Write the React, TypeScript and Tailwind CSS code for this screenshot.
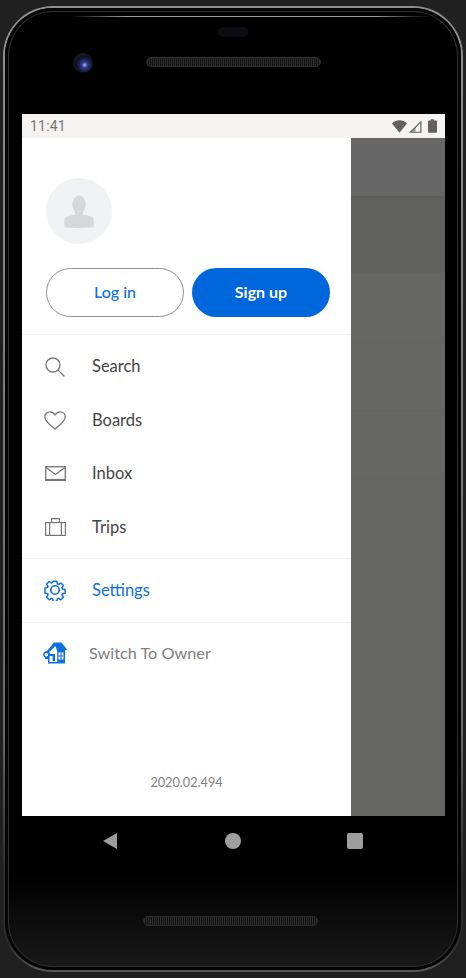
import type { ReactNode } from "react";

function Wifi() {
  return (
    <svg width="15" height="13" viewBox="0 0 15 13">
      <path d="M0 3.400C2 1.300 4.600 0.200 7.500 0.200s5.500 1.100 7.500 3.200L7.500 12.800z" fill="#616161" />
    </svg>
  );
}

function Signal() {
  return (
    <svg width="14" height="13" viewBox="0 0 14 13">
      <path d="M13.500 0.500V12.800H0.800zM12.300 3.300L3.700 11.700H12.300z" fill="#616161" fillRule="evenodd" />
      <path d="M7.500 7.800V11.700H3.700z" fill="#8a8a8a" />
    </svg>
  );
}

function Battery() {
  return (
    <svg width="9" height="14" viewBox="0 0 9 14">
      <path d="M2.800 0.200H6.200V1.400H8C8.600 1.400 9 1.800 9 2.300V13C9 13.500 8.600 13.800 8 13.800H1C0.400 13.800 0 13.500 0 13V2.300C0 1.800 0.400 1.400 1 1.400H2.800z" fill="#616161" />
    </svg>
  );
}

function Avatar() {
  return (
    <svg width="30" height="33" viewBox="0 0 30 33" fill="#d6d7d9">
      <ellipse cx="15" cy="9.500" rx="6.600" ry="9.300" />
      <path d="M11 16.500H19V19.500C22 20.500 26 20.800 28.300 22.200 29.300 22.800 29.700 23.800 29.700 25V31C29.700 32 29 32.700 28 32.600L15 33 2 32.600C1 32.700 0.300 32 0.300 31V25C0.300 23.800 0.700 22.800 1.700 22.200 4 20.800 8 20.500 11 19.500z" />
    </svg>
  );
}

function SearchIcon() {
  return (
    <svg width="20" height="20" viewBox="0 0 20 20" fill="none" stroke="#757575" strokeWidth="1.300">
      <circle cx="8" cy="8" r="7" />
      <path d="M13.100 13.100L19 19" strokeLinecap="round" />
    </svg>
  );
}

function HeartIcon() {
  return (
    <svg width="22" height="19" viewBox="0 0 22 19" fill="none" stroke="#757575" strokeWidth="1.300">
      <path d="M11 18C8 15.300 0.800 10.600 0.800 5.900 0.800 2.900 3.100 0.800 5.800 0.800c2.200 0 4 1.100 5.200 3.100C12.200 1.900 14 0.800 16.200 0.800c2.700 0 5 2.100 5 5.100C21.200 10.600 14 15.300 11 18z" strokeLinejoin="round" />
    </svg>
  );
}

function MailIcon() {
  return (
    <svg width="21" height="15" viewBox="0 0 21 15" fill="none" stroke="#757575" strokeWidth="1.300">
      <rect x="0.700" y="0.700" width="19.600" height="13.600" />
      <path d="M1 1.500L10.500 8.500L20 1.500" />
      <path d="M0.700 13.800H20.300" strokeWidth="1.800" />
    </svg>
  );
}

function SuitcaseIcon() {
  return (
    <svg width="21" height="18" viewBox="0 0 21 18" fill="none" stroke="#757575" strokeWidth="1.200">
      <rect x="0.600" y="4.600" width="19.800" height="12.800" />
      <path d="M4.600 17.400V4.600M16.400 17.400V4.600" />
      <path d="M6.600 4.600V0.700H14.400V4.600" />
    </svg>
  );
}

function GearIcon() {
  return (
    <svg width="22" height="22" viewBox="0 0 24 24" fill="none" stroke="#0d6fe0" strokeWidth="1.800" strokeLinejoin="round">
      <path d="M9.800 1.500h4.400l0.600 3.100 1.700 0.700 2.600-1.800 3.100 3.100-1.800 2.600 0.700 1.700 3.100 0.600v4.400l-3.100 0.600-0.700 1.700 1.800 2.600-3.100 3.100-2.600-1.800-1.700 0.700-0.600 3.100H9.800l-0.600-3.100-1.700-0.700-2.600 1.800-3.100-3.100 1.800-2.600-0.700-1.700-3.100-0.600V9.700l3.100-0.600 0.700-1.700-1.800-2.600 3.100-3.100 2.600 1.800 1.700-0.700z" transform="translate(1.200 1.200) scale(0.9)" />
      <circle cx="12" cy="12" r="4.600" />
    </svg>
  );
}

function OwnerIcon() {
  return (
    <svg width="24" height="22" viewBox="0 0 24 22">
      {/* roof and walls */}
      <path d="M11 0.500H18.500L24 7.500L22 8.500V21.500H5V17H2V10L4 9z" fill="#0d6fe0" />
      {/* front of the house */}
      <path d="M12.500 4L6.500 9.800V20H14.200V9z" fill="#fff" />
      {/* window */}
      <path d="M15.500 10.500H20.500V17.500H15.500z" fill="#fff" />
      <path d="M18 10.500V17.500M15.500 14H20.500" stroke="#0d6fe0" strokeWidth="1.100" />
      {/* key */}
      <circle cx="3.400" cy="12.800" r="2.500" fill="#fff" stroke="#0d6fe0" strokeWidth="1.400" />
      <path d="M5.500 12H12V19H9.600V14H5.500z" fill="#0d6fe0" />
    </svg>
  );
}

function MenuRow({ icon, label }: { icon: ReactNode; label: string }) {
  return (
    <div className="flex h-[53.500px] items-center">
      <div className="mr-[4px] flex w-[66px] shrink-0 justify-center">{icon}</div>
      <span className="text-[16.500px] text-[#454545]">{label}</span>
    </div>
  );
}

function Speaker() {
  return (
    <div className="h-[10px] w-[175px] rounded-full border border-[#2e2e2e] bg-[repeating-linear-gradient(90deg,#2b2b2b_0px,#2b2b2b_1px,#141414_1px,#141414_2px)]" />
  );
}

export default function App() {
  return (
    <div className="h-[978px] w-[466px] overflow-hidden bg-[#202020] px-[3px] pt-[6px] font-['Lato',sans-serif]">
      {/* device rim */}
      <div className="h-[966px] w-[460px] rounded-[50px] bg-[linear-gradient(180deg,#8f8f8f_0%,#6a6a6a_75%,#2a2a2a_90%,#2a2a2a_97%,#5a5a5a_100%)] p-[2px]">
        <div className="relative h-[962px] w-[456px] overflow-hidden rounded-[48px] bg-[linear-gradient(180deg,#000_0%,#000_90%,#1a1a1a_100%)] shadow-[inset_0_0_0_3px_#050505,inset_0_0_0_4px_#2e2e2e]">
          {/* top bezel */}
          <div className="relative h-[106px]">
            <div className="absolute left-[65px] top-[8px] h-[1px] w-[360px] bg-[linear-gradient(90deg,transparent,#9a9a9a_15%,#9a9a9a_85%,transparent)]" />
            <div className="absolute left-[213px] top-[19px] h-[10px] w-[30px] rounded-full bg-[#0b0d12]" />
            <div className="absolute left-[68px] top-[45px] h-[20px] w-[20px] rounded-full bg-[radial-gradient(circle_at_58%_60%,#a0b0ff_0%,#2b3a8c_18%,#0c1020_50%,#1c1d24_72%)]" />
            <div className="absolute left-[141px] top-[49px]">
              <Speaker />
            </div>
          </div>

          {/* screen */}
          <div className="ml-[17px] h-[702px] w-[423px] overflow-hidden">
            <div className="flex h-[24px] items-center justify-between bg-[#f4f3f1] px-[8px]">
              <span className="font-['Roboto',sans-serif] text-[14px] tracking-[0.2px] text-[#777777]">11:41</span>
              <div className="flex items-center">
                <Wifi />
                <div className="ml-[1px]">
                  <Signal />
                </div>
                <div className="ml-[6px] flex">
                  <Battery />
                </div>
              </div>
            </div>

            <div className="flex h-[678px]">
              {/* drawer */}
              <div className="flex w-[329px] flex-col bg-white">
                <div className="pl-[24px] pr-[21px] pt-[40px]">
                  <div className="flex h-[66px] w-[66px] items-center justify-center rounded-full bg-[#f1f2f4]">
                    <Avatar />
                  </div>
                  <div className="mt-[24px] flex gap-[8px]">
                    <div className="flex h-[49px] w-[138px] items-center justify-center rounded-full border border-[#8f8f8f] pb-[2px] text-[16px] font-medium text-[#0d6fe0]">
                      Log in
                    </div>
                    <div className="flex h-[49px] w-[138px] items-center justify-center rounded-full bg-[#0066dc] pb-[2px] text-[16px] font-bold text-white">
                      Sign up
                    </div>
                  </div>
                </div>

                <div className="mt-[17px] border-t border-[#efefef] pt-[5px]">
                  <MenuRow icon={<SearchIcon />} label="Search" />
                  <MenuRow icon={<HeartIcon />} label="Boards" />
                  <MenuRow icon={<MailIcon />} label="Inbox" />
                  <MenuRow icon={<SuitcaseIcon />} label="Trips" />
                </div>

                <div className="mt-[4px] flex h-[65px] items-center border-y border-[#efefef] pb-[1px]">
                  <div className="flex w-[66px] shrink-0 justify-center">
                    <GearIcon />
                  </div>
                  <span className="ml-[4px] text-[16.500px] text-[#0d6fe0]">Settings</span>
                </div>

                <div className="flex h-[61px] items-center pb-[1px]">
                  <div className="flex w-[66px] shrink-0 justify-center">
                    <OwnerIcon />
                  </div>
                  <span className="ml-[1px] text-[16.250px] text-[#808080]">Switch To Owner</span>
                </div>

                <div className="mt-[89px] text-center text-[12.700px] text-[#808080]">2020.02.494</div>
              </div>

              {/* dimmed content behind the drawer */}
              <div className="flex flex-1 flex-col bg-[#656563]">
                <div className="h-[59px] border-b border-[#5c5c5b] bg-[#666666]" />
                <div className="h-[75px] bg-[#5f5f5d]" />
                <div className="h-[70px] border-t border-[#636362] bg-[#666665]" />
                <div className="h-[68px] border-t border-[#636362] bg-[#666665]" />
                <div className="h-[68px] border-t border-[#636362] bg-[#666665]" />
              </div>
            </div>
          </div>

          {/* nav bar */}
          <div className="ml-[17px] flex h-[48px] w-[423px] items-center pt-[2px]">
            <div className="ml-[81px] h-0 w-0 border-y-[8.500px] border-r-[14.500px] border-y-transparent border-r-[#9e9e9e]" />
            <div className="ml-[108px] h-[16px] w-[16px] rounded-full bg-[#9e9e9e]" />
            <div className="ml-[106px] h-[16px] w-[16px] rounded-[2px] bg-[#9e9e9e]" />
          </div>

          {/* bottom speaker */}
          <div className="ml-[138px] mt-[52px]">
            <Speaker />
          </div>
        </div>
      </div>
    </div>
  );
}
